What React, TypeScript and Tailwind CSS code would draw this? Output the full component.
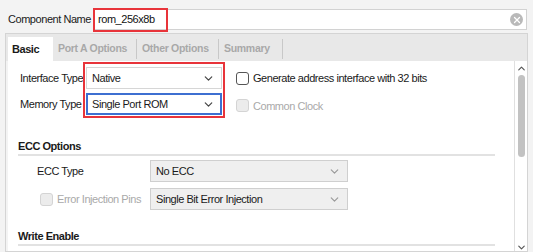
import { ChevronDown, ChevronUp, X } from "lucide-react";

const font = "font-['Liberation_Sans',Arial,sans-serif] text-[11px] tracking-[-0.45px] whitespace-nowrap";

const Select = ({
  value,
  width,
  variant = "white",
}: {
  value: string;
  width: string;
  variant?: "white" | "focus" | "gray";
}) => {
  const box =
    variant === "focus"
      ? "border-2 border-[#3d6fd1] bg-white pl-[4px] pr-[5px]"
      : variant === "gray"
        ? "border border-[#cfcfcf] bg-[#efefef] pl-[5px] pr-[6px]"
        : "border border-[#d6d6d6] bg-white pl-[5px] pr-[6px]";
  return (
    <div className={`${width} ${box} h-[22px] flex items-center justify-between`}>
      <span className="text-[#1a1a1a]">{value}</span>
      <ChevronDown
        className={variant === "gray" ? "text-[#9a9a9a]" : "text-[#444]"}
        size={13}
        strokeWidth={2.2}
      />
    </div>
  );
};

const Check = ({ label, disabled }: { label: string; disabled?: boolean }) => (
  <div className="flex items-center gap-[4px]">
    <div
      className={`w-[13px] h-[13px] rounded-[3px] border ${
        disabled ? "border-[#d4d4d4] bg-[#ececec]" : "border-[#555] bg-white"
      }`}
    />
    <span className={disabled ? "text-[#a9a9a9]" : "text-[#1a1a1a]"}>{label}</span>
  </div>
);

const Section = ({ title }: { title: string }) => (
  <div className="ml-[10px] mr-[19px] border-b-2 border-[#e2e2e2] pb-[1px] leading-[14px]">
    <span className="font-bold text-[#1a1a1a]">{title}</span>
  </div>
);

const tabs = [
  { label: "Port A Options", w: "w-[84px]" },
  { label: "Other Options", w: "w-[82px]" },
  { label: "Summary", w: "w-[64px]" },
];

export default function App() {
  return (
    <div className={`${font} w-[533px] h-[252px] overflow-hidden bg-[#f3f3f3] flex flex-col`}>
      <div className="flex items-center pt-[9px] pl-[8px] pr-[6px]">
        <span className="text-[#1a1a1a] w-[85px]">Component Name</span>
        <div className="relative flex-1 h-[21px] bg-white border border-[#d2d2d2] flex items-center justify-between pl-[4px] pr-[3px]">
          <span className="text-[#111]">rom_256x8b</span>
          <div className="w-[13px] h-[13px] rounded-full bg-[#b9b9b9] flex items-center justify-center">
            <X size={10} strokeWidth={3} className="text-white" />
          </div>
          <div className="absolute -left-[1px] -top-[2px] w-[75px] h-[24px] border-2 border-[#e8343a]" />
        </div>
      </div>

      <div className="mx-[5px] mt-[3px] flex-1 border border-[#d4d4d4] flex flex-col">
        <div className="h-[27px] bg-[#e8e8e8] flex items-end pl-[2px]">
          <div className="h-[24px] w-[45px] bg-white flex items-center pl-[4px]">
            <span className="font-bold text-[#1a1a1a]">Basic</span>
          </div>
          {tabs.map((t) => (
            <div key={t.label} className={`${t.w} h-[24px] flex items-center justify-between pl-[5px]`}>
              <span className="font-bold text-[#a8a8a8] text-[10.5px] tracking-[-0.3px]">{t.label}</span>
              <div className="w-px h-[20px] bg-[#c8c8c8]" />
            </div>
          ))}
        </div>

        <div className="flex-1 flex">
          <div className="flex-1 bg-white ml-[2px] flex flex-col">
            <div className="relative flex mt-[6px] ml-[12px]">
              <div className="flex flex-col gap-[4px]">
                <div className="flex items-center">
                  <span className="w-[66px] text-[#1a1a1a]">Interface Type</span>
                  <Select value="Native" width="w-[136px]" />
                </div>
                <div className="flex items-center">
                  <span className="w-[66px] text-[#1a1a1a]">Memory Type</span>
                  <Select value="Single Port ROM" width="w-[136px]" variant="focus" />
                </div>
              </div>
              <div className="flex flex-col gap-[11px] ml-[14px] pt-[3px]">
                <Check label="Generate address interface with 32 bits" />
                <Check label="Common Clock" disabled />
              </div>
              <div className="absolute left-[63px] -top-[5px] w-[142px] h-[56px] border-2 border-[#e8343a]" />
            </div>

            <div className="mt-[24px]">
              <Section title="ECC Options" />
            </div>
            <div className="flex flex-col gap-[6px] mt-[4px] ml-[29px]">
              <div className="flex items-center">
                <span className="w-[113px] text-[#1a1a1a]">ECC Type</span>
                <Select value="No ECC" width="w-[198px]" variant="gray" />
              </div>
              <div className="flex items-center">
                <div className="w-[113px] pl-[3px]">
                  <Check label="Error Injection Pins" disabled />
                </div>
                <Select value="Single Bit Error Injection" width="w-[198px]" variant="gray" />
              </div>
            </div>
            <div className="mt-[19px]">
              <Section title="Write Enable" />
            </div>
          </div>

          <div className="w-[13px] border-l border-[#e0e0e0] bg-white flex flex-col items-center">
            <ChevronUp size={11} strokeWidth={2.5} className="text-[#555] mt-[2px]" />
            <div className="w-[7px] h-[82px] rounded-full bg-[#c2c2c2] mt-[1px]" />
            <div className="flex-1" />
            <ChevronDown size={11} strokeWidth={2.5} className="text-[#555] mb-[-2px]" />
          </div>
        </div>
      </div>
    </div>
  );
}
